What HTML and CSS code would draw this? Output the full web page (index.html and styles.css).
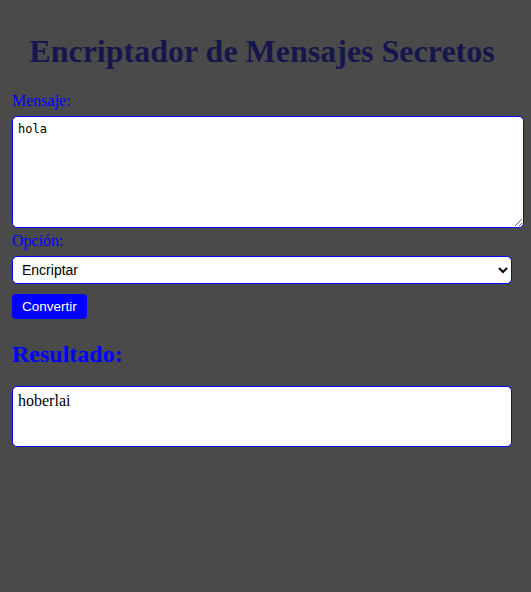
FILE: index.html
```html
<!DOCTYPE html>
<html lang="es">
<head>
<meta charset="utf-8">
<title>Encriptador de Mensajes Secretos</title>
<link rel="stylesheet" href="styles.css">
</head>
<body>
<div class="app">
  <h1 class="title">Encriptador de Mensajes Secretos</h1>
  <label class="label" for="msg">Mensaje:</label>
  <textarea id="msg" class="message">hola</textarea>
  <label class="label" for="opt">Opción:</label>
  <select id="opt" class="option">
    <option>Encriptar</option>
    <option>Desencriptar</option>
  </select>
  <button class="convert">Convertir</button>
  <h2 class="result-title">Resultado:</h2>
  <div class="result">hoberlai</div>
</div>
</body>
</html>
```
FILE: styles.css
```css
html, body {
  margin: 0;
  padding: 0;
  background: #4a4a4a;
}
body {
  min-height: 592px;
  font-family: "Liberation Serif", "Times New Roman", serif;
}
.app {
  display: flex;
  flex-direction: column;
  align-items: flex-start;
  padding: 33px 7px 0 12px;
}
.title {
  align-self: stretch;
  margin: 0 8px 22px -4px;
  text-align: center;
  font-size: 32px;
  line-height: 37px;
  font-weight: bold;
  color: #16164d;
}
.label {
  display: block;
  color: #0000ff;
  font-size: 16px;
  line-height: 18px;
  margin-bottom: 6px;
}
.message {
  box-sizing: border-box;
  width: 512px;
  height: 112px;
  margin: 0 0 4px;
  padding: 5px;
  border: 1px solid #0000ff;
  border-radius: 5px;
  background: #fff;
  font-family: "DejaVu Sans Mono", "Liberation Mono", monospace;
  font-size: 12px;
  color: #000;
  outline: none;
}
.option {
  box-sizing: border-box;
  width: 500px;
  height: 28px;
  margin: 0 0 10px;
  padding: 0 4px 0 5px;
  border: 1px solid #0000ff;
  border-radius: 5px;
  background: #fff;
  color: #000;
  font-family: "Liberation Sans", Arial, sans-serif;
  font-size: 14px;
}
.convert {
  box-sizing: border-box;
  height: 25px;
  padding: 0 10px;
  border: none;
  border-radius: 4px;
  background: #0000ff;
  color: #fff;
  font-family: "Liberation Sans", Arial, sans-serif;
  font-size: 13.5px;
  cursor: pointer;
}
.result-title {
  margin: 21px 0 18px;
  font-size: 24px;
  line-height: 28px;
  font-weight: bold;
  color: #0000ff;
}
.result {
  box-sizing: border-box;
  width: 500px;
  height: 61px;
  padding: 5px;
  border: 1px solid #0000ff;
  border-radius: 5px;
  background: #fff;
  color: #000;
  font-size: 16px;
  line-height: 18px;
}
```
